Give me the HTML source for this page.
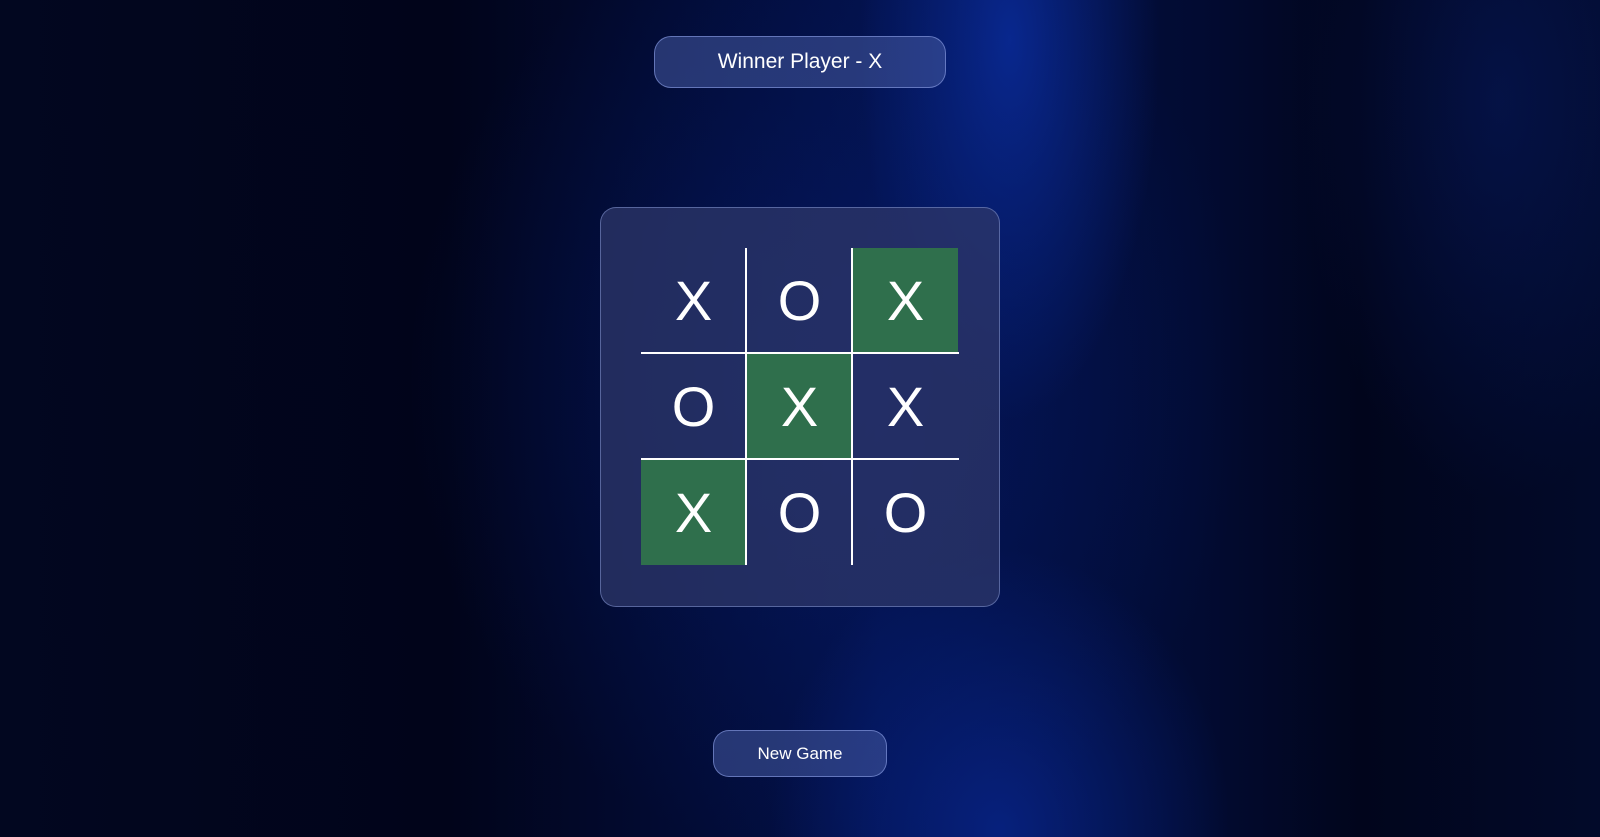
<!DOCTYPE html>
<html><head><style>
html,body{margin:0;padding:0;}
body{width:1600px;height:837px;overflow:hidden;position:relative;font-family:"Liberation Sans",sans-serif;
background:
radial-gradient(ellipse 150px 380px at 1010px 40px, rgba(10,45,160,0.8), transparent),
radial-gradient(ellipse 230px 280px at 1000px 830px, rgba(8,40,150,0.7), transparent),
radial-gradient(ellipse 420px 480px at 830px 380px, rgba(5,28,110,0.55), transparent),
radial-gradient(ellipse 200px 400px at 1500px 100px, rgba(8,30,110,0.45), transparent),
linear-gradient(90deg,#020720 0%,#01041a 28%,#03114a 55%,#020b32 75%,#01051c 85%,#020a2a 100%);}
.btn{position:absolute;box-sizing:border-box;border:1.5px solid rgba(140,160,230,0.6);background:rgba(70,90,160,0.55);color:#fff;display:flex;align-items:center;justify-content:center;}
#win{left:654px;top:36px;width:292px;height:52px;border-radius:17px;font-size:21px;}
#ng{left:713px;top:730px;width:174px;height:47px;border-radius:16px;font-size:17px;}
#card{position:absolute;left:600px;top:207px;width:400px;height:400px;box-sizing:border-box;border:1.5px solid rgba(140,160,220,0.5);border-radius:16px;background:rgba(45,55,105,0.75);}
.c{position:absolute;width:105px;height:105px;display:flex;align-items:center;justify-content:center;color:#fff;font-size:56px;}
.g{background:#2f6f4c;}
.l{position:absolute;background:#fff;}
</style></head><body>
<div class="btn" id="win">Winner Player - X</div>
<div id="card"></div>
<div class="c" style="left:641px;top:248px">X</div>
<div class="c" style="left:747px;top:248px">O</div>
<div class="c g" style="left:853px;top:248px">X</div>
<div class="c" style="left:641px;top:354px">O</div>
<div class="c g" style="left:747px;top:354px">X</div>
<div class="c" style="left:853px;top:354px">X</div>
<div class="c g" style="left:641px;top:460px">X</div>
<div class="c" style="left:747px;top:460px">O</div>
<div class="c" style="left:853px;top:460px">O</div>
<div class="l" style="left:745px;top:248px;width:2px;height:317px"></div>
<div class="l" style="left:851px;top:248px;width:2px;height:317px"></div>
<div class="l" style="left:641px;top:352px;width:318px;height:2px"></div>
<div class="l" style="left:641px;top:458px;width:318px;height:2px"></div>
<div class="btn" id="ng">New Game</div>
</body></html>
